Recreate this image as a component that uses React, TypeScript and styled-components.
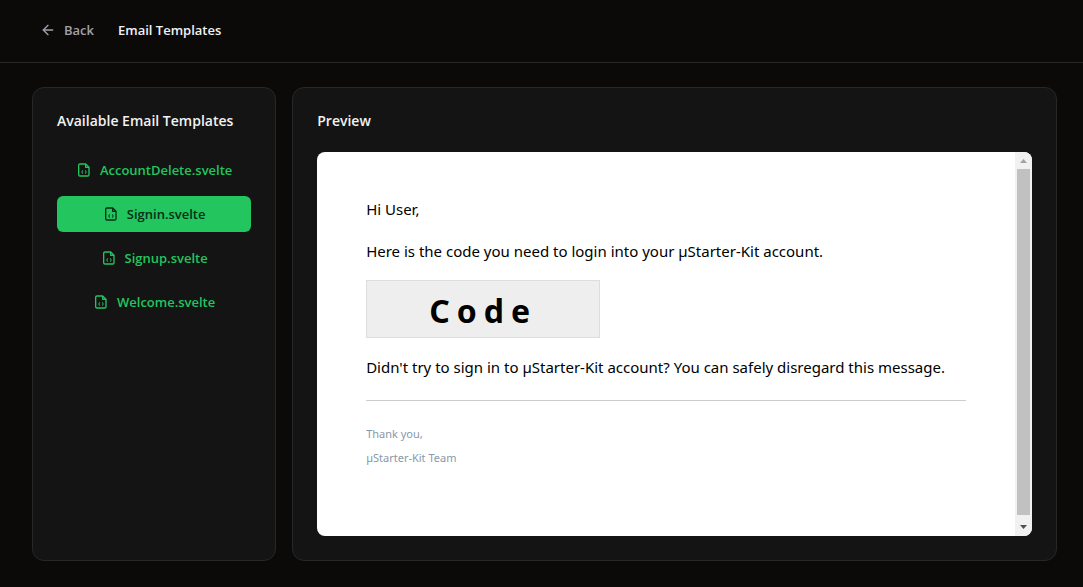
import React, { useState } from 'react';
import styled, { createGlobalStyle } from 'styled-components';
import { ArrowLeft } from 'lucide-react';

const GlobalStyle = createGlobalStyle`
  * { box-sizing: border-box; }
  body {
    margin: 0;
    background: #0c0a09;
    color: #f2f2f2;
    font-family: "Segoe UI", "Open Sans", "Noto Sans", sans-serif;
    font-size: 13px;
    line-height: 20px;
  }
  h1, h2, p { margin: 0; }
`;

const Page = styled.div`
  display: flex;
  flex-direction: column;
  min-height: 100vh;
`;

const Header = styled.header`
  display: flex;
  align-items: center;
  gap: 24px;
  padding: 20px 40px 22px;
  border-bottom: 1px solid #27272a;
`;

const BackLink = styled.a`
  display: flex;
  align-items: center;
  gap: 8px;
  color: #a1a1aa;
  font-weight: 600;
  text-decoration: none;
`;

const PageTitle = styled.h1`
  font-size: 13px;
  font-weight: 600;
`;

const Main = styled.main`
  flex: 1;
  display: grid;
  grid-template-columns: repeat(4, minmax(0, 1fr));
  gap: 16px;
  padding: 24px 26px 26px 32px;
`;

const Card = styled.section<{ $span?: number }>`
  grid-column: span ${(p) => p.$span ?? 1};
  display: flex;
  flex-direction: column;
  gap: 19px;
  padding: 21px 24px 24px;
  background: #141414;
  border: 1px solid #27272a;
  border-radius: 12px;
`;

const CardTitle = styled.h2`
  font-size: 14px;
  line-height: 24px;
  font-weight: 600;
  white-space: nowrap;
`;

const TemplateList = styled.nav`
  display: flex;
  flex-direction: column;
  gap: 8px;
`;

const TemplateButton = styled.button<{ $active: boolean }>`
  display: flex;
  align-items: center;
  justify-content: center;
  gap: 8px;
  height: 36px;
  padding: 0 16px;
  border: 0;
  border-radius: 6px;
  background: ${(p) => (p.$active ? '#22c55e' : 'transparent')};
  color: ${(p) => (p.$active ? '#052e16' : '#22c55e')};
  font: inherit;
  font-weight: 600;
  cursor: pointer;
`;

const FileIcon = styled.svg`
  flex-shrink: 0;
  width: 16px;
  height: 16px;
  fill: none;
  stroke: currentColor;
  stroke-width: 2;
  stroke-linejoin: round;
`;

const Frame = styled.div`
  flex: 1;
  display: flex;
  overflow: hidden;
  border-radius: 8px;
  background: #ffffff;
  color: #000000;
`;

const FrameBody = styled.div`
  flex: 1;
  padding: 45px 24px;
`;

const Email = styled.article`
  max-width: 600px;
  margin: 0 auto;
  font-family: "Segoe UI", "Noto Sans", sans-serif;
`;

const Paragraph = styled.p`
  margin-bottom: 18px;
  font-size: 15px;
  line-height: 24px;
`;

const Code = styled.div`
  width: 234px;
  margin: -1px 0 17px;
  padding: 10px 0 6px;
  border: 1px solid #dddddd;
  background: #eeeeee;
  font-size: 32px;
  line-height: 40px;
  font-weight: 700;
  letter-spacing: 7px;
  text-align: center;
`;

const Divider = styled.hr`
  margin: 21px 0;
  border: 0;
  border-top: 1px solid #cccccc;
`;

const SignOff = styled.p`
  color: #8898aa;
  font-size: 11px;
  line-height: 24px;
`;

const ScrollTrack = styled.div`
  display: flex;
  flex-direction: column;
  align-items: center;
  width: 17px;
  background: #f1f1f1;
`;

const ScrollArrow = styled.svg`
  width: 17px;
  height: 17px;
`;

const ScrollThumb = styled.div`
  flex: 1;
  width: 13px;
  margin-bottom: 4px;
  background: #c1c1c1;
`;

const templates = ['AccountDelete.svelte', 'Signin.svelte', 'Signup.svelte', 'Welcome.svelte'];

export default function App() {
  const [selected, setSelected] = useState('Signin.svelte');
  return (
    <>
      <GlobalStyle />
      <Page>
        <Header>
          <BackLink href="#">
            <ArrowLeft size={16} />
            Back
          </BackLink>
          <PageTitle>Email Templates</PageTitle>
        </Header>
        <Main>
          <Card>
            <CardTitle>Available Email Templates</CardTitle>
            <TemplateList>
              {templates.map((name) => (
                <TemplateButton
                  key={name}
                  type="button"
                  $active={name === selected}
                  onClick={() => setSelected(name)}
                >
                  <FileIcon viewBox="0 0 24 24" aria-hidden="true">
                    <path d="M6 3h8.500L19.500 8v11a2 2 0 0 1-2 2H6a2 2 0 0 1-2-2V5a2 2 0 0 1 2-2z" />
                    <path d="M14.500 3v5h5" />
                    <path
                      strokeWidth="1.5"
                      d="M10.500 12.500c-1.500 0-.5 2.500-2 2.500 1.500 0 .5 2.500 2 2.500M13.500 12.500c1.500 0 .5 2.500 2 2.500-1.500 0-.5 2.500-2 2.500"
                    />
                  </FileIcon>
                  {name}
                </TemplateButton>
              ))}
            </TemplateList>
          </Card>
          <Card $span={3}>
            <CardTitle>Preview</CardTitle>
            <Frame>
              <FrameBody>
                <Email>
                  <Paragraph>Hi User,</Paragraph>
                  <Paragraph>Here is the code you need to login into your µStarter-Kit account.</Paragraph>
                  <Code>Code</Code>
                  <Paragraph>
                    Didn't try to sign in to µStarter-Kit account? You can safely disregard this message.
                  </Paragraph>
                  <Divider />
                  <SignOff>Thank you,</SignOff>
                  <SignOff>µStarter-Kit Team</SignOff>
                </Email>
              </FrameBody>
              <ScrollTrack aria-hidden="true">
                <ScrollArrow viewBox="0 0 17 17">
                  <path d="M5 11h7L8.500 7z" fill="#a3a3a3" />
                </ScrollArrow>
                <ScrollThumb />
                <ScrollArrow viewBox="0 0 17 17">
                  <path d="M5 6h7L8.500 10z" fill="#505050" />
                </ScrollArrow>
              </ScrollTrack>
            </Frame>
          </Card>
        </Main>
      </Page>
    </>
  );
}
